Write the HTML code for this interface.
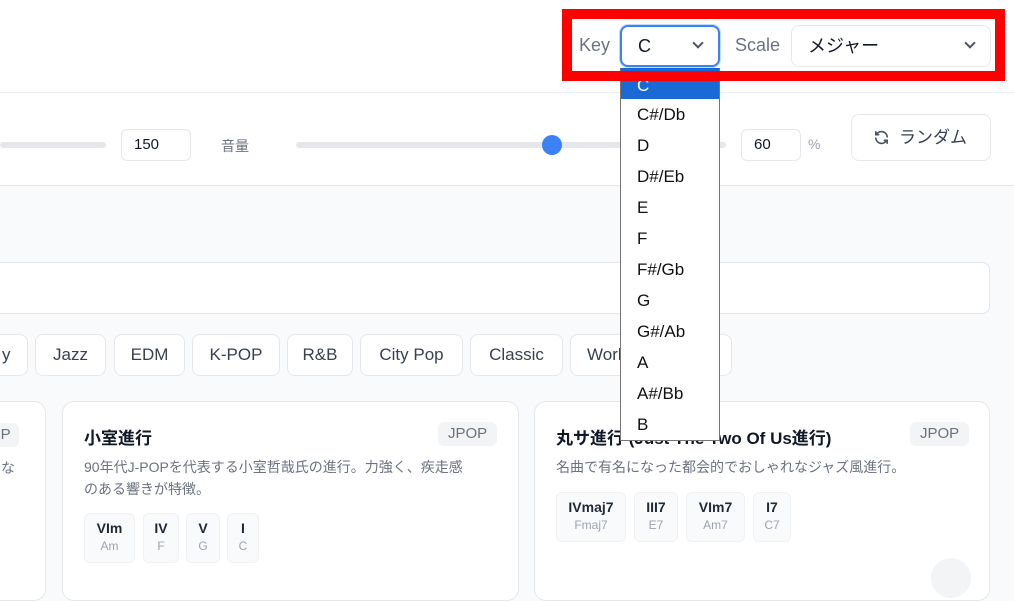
<!DOCTYPE html>
<html><head><meta charset="utf-8"><style>
*{box-sizing:border-box;margin:0;padding:0}
body{width:1014px;height:570px;overflow:hidden;background:#f9fafb;font-family:"Liberation Sans","Noto Sans CJK JP",sans-serif;position:relative;color:#111827}
.abs{position:absolute}
.hdr{left:0;top:0;width:1014px;height:93px;background:#fff;border-bottom:1px solid #eef0f2}
.ctl{left:0;top:94px;width:1014px;height:92px;background:#fff;border-bottom:1px solid #e5e7eb}
.sel{border:1px solid #e5e7eb;border-radius:8px;background:#fff;font-size:18px;padding-left:16px;line-height:40px}
.chev{position:absolute;right:16px;top:13px;width:8px;height:8px;border-right:2px solid #4b5563;border-bottom:2px solid #4b5563;transform:rotate(45deg)}
.lbl{font-size:18px;color:#6b7280}
.inp{border:1px solid #e5e7eb;border-radius:6px;background:#fff;font-size:15px;padding-left:12px;line-height:30px}
.track{height:6px;background:#e5e7eb;border-radius:3px}
.chip{top:334px;height:42px;border:1px solid #e5e7eb;border-radius:8px;background:#fff;font-size:17px;color:#374151;line-height:40px;text-align:center}
.card{top:401px;height:200px;background:#fff;border:1px solid #e5e7eb;border-radius:12px}
.tag{background:#f3f4f6;border-radius:6px;font-size:15px;color:#6b7280;line-height:24px;padding:0 10px}
.ttl{font-size:17px;font-weight:bold}
.desc{font-size:14px;color:#6b7280;line-height:22px;white-space:nowrap}
.ch{border:1px solid #f0f1f3;background:#f9fafb;border-radius:6px;text-align:center;padding-top:6px}
.ch b{display:block;font-size:14px;color:#1f2937}
.ch span{display:block;font-size:12px;color:#9ca3af;margin-top:3px}
.dd{left:620px;top:68px;width:100px;height:373px;background:#fff;border:1px solid #767676;border-top:none}
.dd div{height:31px;line-height:31px;font-size:17px;padding-left:16px;color:#111}
</style></head><body>
<div class="abs hdr"></div>
<div class="abs ctl"></div>
<span class="abs lbl" style="left:579px;top:35px">Key</span>
<div class="abs sel" style="left:620px;top:25px;width:100px;height:42px;border:2px solid #3b82f6;box-shadow:0 0 0 1px #bfdbfe;line-height:38px">C<i class="chev" style="top:12px"></i></div>
<span class="abs lbl" style="left:735px;top:35px">Scale</span>
<div class="abs sel" style="left:791px;top:25px;width:200px;height:42px">メジャー<i class="chev"></i></div>
<div class="abs track" style="left:0;top:142px;width:106px"></div>
<div class="abs inp" style="left:121px;top:129px;width:70px;height:32px">150</div>
<span class="abs" style="left:221px;top:136px;font-size:14px;color:#6b7280">音量</span>
<div class="abs track" style="left:296px;top:142px;width:430px"></div>
<div class="abs" style="left:542px;top:135px;width:20px;height:20px;border-radius:50%;background:#3b82f6"></div>
<div class="abs inp" style="left:741px;top:129px;width:60px;height:32px">60</div>
<span class="abs" style="left:808px;top:136px;font-size:14px;color:#9ca3af">%</span>
<div class="abs" style="left:851px;top:114px;width:140px;height:47px;border:1px solid #e5e7eb;border-radius:8px;background:#fff;font-size:17px;color:#374151;line-height:45px;padding-left:21px"><svg width="17" height="17" viewBox="0 0 24 24" style="vertical-align:-3px;margin-right:9px" fill="none" stroke="#4b5563" stroke-width="2.4" stroke-linecap="round"><path d="M20 11a8 8 0 0 0-14.5-4M4 4v4h4M4 13a8 8 0 0 0 14.5 4M20 20v-4h-4"/></svg>ランダム</div>
<div class="abs" style="left:-10px;top:262px;width:1000px;height:52px;border:1px solid #e5e7eb;border-radius:8px;background:#fff"></div>
<div class="abs chip" style="left:-20px;width:48px;text-align:left;padding-left:21px">y</div>
<div class="abs chip" style="left:35px;width:71px">Jazz</div>
<div class="abs chip" style="left:114px;width:71px">EDM</div>
<div class="abs chip" style="left:192px;width:88px">K-POP</div>
<div class="abs chip" style="left:287px;width:66px">R&amp;B</div>
<div class="abs chip" style="left:360px;width:103px">City Pop</div>
<div class="abs chip" style="left:470px;width:93px">Classic</div>
<div class="abs chip" style="left:570px;width:162px;text-align:left;padding-left:16px">World</div>
<div class="abs card" style="left:-20px;width:66px"><div class="abs tag" style="left:0;top:21px;padding:0 8px">OP</div><div class="abs desc" style="left:20px;top:55px">な</div></div>
<div class="abs card" style="left:62px;width:457px">
<div class="abs ttl" style="left:21px;top:22px">小室進行</div>
<div class="abs tag" style="left:375px;top:20px">JPOP</div>
<div class="abs desc" style="left:21px;top:54px">90年代J-POPを代表する小室哲哉氏の進行。力強く、疾走感<br>のある響きが特徴。</div>
<div class="abs ch" style="left:21px;top:111px;width:51px;height:50px"><b>VIm</b><span>Am</span></div>
<div class="abs ch" style="left:80px;top:111px;width:36px;height:50px"><b>IV</b><span>F</span></div>
<div class="abs ch" style="left:123px;top:111px;width:34px;height:50px"><b>V</b><span>G</span></div>
<div class="abs ch" style="left:164px;top:111px;width:32px;height:50px"><b>I</b><span>C</span></div>
</div>
<div class="abs card" style="left:534px;width:456px">
<div class="abs ttl" style="left:21px;top:22px">丸サ進行 (Just The Two Of Us進行)</div>
<div class="abs tag" style="left:375px;top:20px">JPOP</div>
<div class="abs desc" style="left:21px;top:54px">名曲で有名になった都会的でおしゃれなジャズ風進行。</div>
<div class="abs ch" style="left:21px;top:90px;width:70px;height:50px"><b>IVmaj7</b><span>Fmaj7</span></div>
<div class="abs ch" style="left:99px;top:90px;width:44px;height:50px"><b>III7</b><span>E7</span></div>
<div class="abs ch" style="left:151px;top:90px;width:59px;height:50px"><b>VIm7</b><span>Am7</span></div>
<div class="abs ch" style="left:218px;top:90px;width:38px;height:50px"><b>I7</b><span>C7</span></div>
<div class="abs" style="left:396px;top:156px;width:40px;height:40px;border-radius:50%;background:#f3f4f6"></div>
</div>
<div class="abs dd">
<div style="background:#1a6ad6;color:#fff;padding-top:2px">C</div>
<div>C#/Db</div><div>D</div><div>D#/Eb</div><div>E</div><div>F</div><div>F#/Gb</div><div>G</div><div>G#/Ab</div><div>A</div><div>A#/Bb</div><div>B</div>
</div>
<div class="abs" style="left:562px;top:9px;width:443px;height:72px;border:10px solid #ff0000"></div>
</body></html>
